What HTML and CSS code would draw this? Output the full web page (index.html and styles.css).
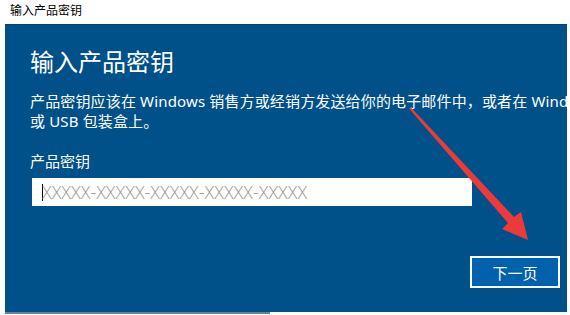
FILE: index.html
```html
<!DOCTYPE html>
<html lang="zh-CN">
<head>
  <meta charset="UTF-8" />
  <title>输入产品密钥</title>
  <link rel="stylesheet" href="styles.css">
</head>
<body>

<div class="titlebar">输入产品密钥</div>

<div class="panel">
  <h1>输入产品密钥</h1>
  <p class="desc">产品密钥应该在 Windows 销售方或经销方发送给你的电子邮件中，或者在 Windows<br>或 USB 包装盒上。</p>
  <div class="field-label">产品密钥</div>
  <div class="keybox"><span class="caret"></span><span class="placeholder">XXXXX-XXXXX-XXXXX-XXXXX-XXXXX</span></div>
  <div class="actions">
    <button class="next">下一页</button>
  </div>
</div>
<div class="bottom-edge"></div>

<svg class="arrow" width="570" height="315" viewBox="0 0 570 315">
  <polygon points="411,107.5 514,217 521,212 528,240 502,229 508,223 409,108.5" fill="#ec3a3a"/>
</svg>

</body>
</html>
```

FILE: styles.css
```css
body {
  margin: 0;
  background: #fff;
  font-family: "Noto Sans", "Noto Sans CJK SC", sans-serif;
  width: 570px;
  height: 315px;
  overflow: hidden;
  position: relative;
}
.titlebar {
  height: 24px;
  line-height: 20px;
  padding-left: 10px;
  font-size: 12px;
  color: #000;
  font-family: "Noto Sans CJK SC", sans-serif;
}
.panel {
  margin-left: 5px;
  width: 562px;
  height: 288px;
  box-sizing: border-box;
  background: #00518a;
  color: #fff;
  padding: 20px 7px 0 25px;
  overflow: hidden;
  border-top: 1px solid #0a3f66;
}
h1 {
  margin: 0;
  font-size: 24px;
  line-height: 32px;
  font-weight: normal;
  font-family: "Noto Sans CJK SC", sans-serif;
}
.desc {
  margin: 14px 0 0;
  font-size: 15px;
  line-height: 20px;
  letter-spacing: 0.15px;
  white-space: nowrap;
}
.field-label {
  margin-top: 20px;
  font-size: 15px;
  line-height: 20px;
  font-family: "Noto Sans CJK SC", sans-serif;
}
.keybox {
  margin: 7px 0 0 2px;
  width: 440px;
  height: 28px;
  background: #fff;
  display: flex;
  align-items: center;
  padding-left: 10px;
  box-sizing: border-box;
}
.caret {
  width: 1px;
  height: 17px;
  background: #000;
  margin-right: -1px;
}
.placeholder {
  font-family: "Open Sans", sans-serif;
  font-weight: 300;
  font-size: 18px;
  color: #9a9a9a;
  line-height: 28px;
}
.actions {
  display: flex;
  justify-content: flex-end;
  margin-top: 50px;
}
.next {
  width: 90px;
  height: 32px;
  background: #0062ad;
  border: 2px solid #fff;
  color: #fff;
  font-size: 15px;
  font-family: "Noto Sans CJK SC", sans-serif;
  padding: 0;
}
.bottom-edge {
  margin-left: 5px;
  width: 265px;
  height: 2px;
  background: #6d8196;
}
.arrow {
  position: absolute;
  left: 0;
  top: 0;
}
```
